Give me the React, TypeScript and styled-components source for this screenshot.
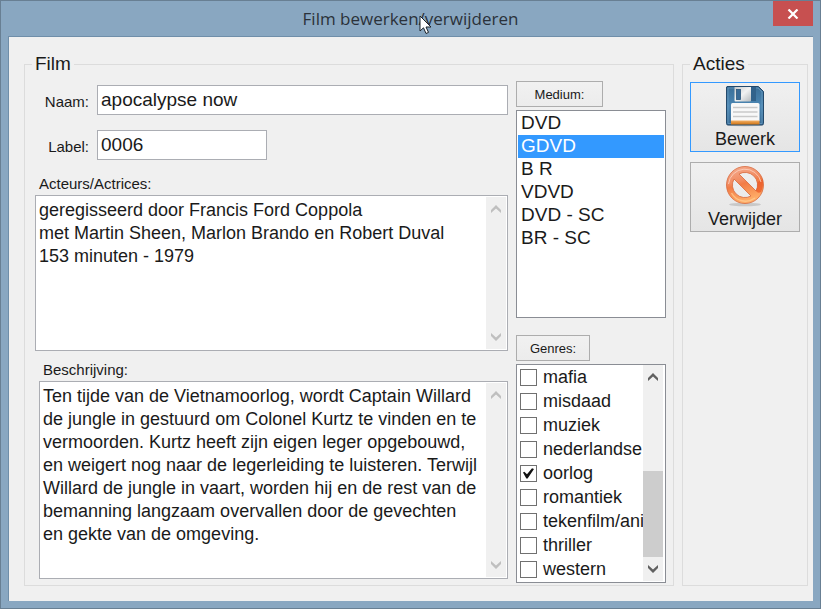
import React, { useState } from "react";
import styled, { createGlobalStyle, css } from "styled-components";

const GlobalStyle = createGlobalStyle`
  *, *::before, *::after { box-sizing: border-box; }
  body {
    margin: 0;
    font-family: "Liberation Sans", Arial, sans-serif;
    font-size: 19px;
    color: #1a1a1a;
  }
  button, input, select, textarea { font: inherit; color: inherit; margin: 0; }
`;

const Window = styled.div`
  min-height: 100vh;
  display: flex;
  flex-direction: column;
  padding: 0 7px 7px;
  background: #89a7c1;
  border: 1px solid #687f93;
`;

const TitleBar = styled.header`
  position: relative;
  height: 35px;
  display: flex;
  justify-content: center;
`;

const Title = styled.h1`
  position: relative;
  margin: 0;
  font: 400 17px/36px "Open Sans", "Noto Sans", sans-serif;
  color: #2b323a;
`;

const Pointer = styled.svg`
  position: absolute;
  left: 116px;
  top: 14px;
  width: 13px;
  height: 20px;
`;

const CloseButton = styled.button`
  position: absolute;
  right: 0;
  top: 0;
  width: 40px;
  height: 25px;
  padding: 0;
  display: flex;
  align-items: center;
  justify-content: center;
  border: 0;
  background: #c75050;
`;

const Client = styled.main`
  flex: 1;
  display: grid;
  grid-template-columns: 1fr 126px;
  gap: 8px;
  padding: 16px 5px 15px 15px;
  background: #f0f0f0;
  border-top: 1px solid #6f8ea9;
  border-left: 1px solid #6f8ea9;
`;

const Group = styled.fieldset`
  min-width: 0;
  margin: 0;
  padding: 6px 7px 2px;
  border: 1px solid #dcdcdc;
  display: flex;
  flex-direction: column;
`;

const Legend = styled.legend`
  padding: 0 3px;
  line-height: 22px;
`;

const FilmBody = styled.div`
  flex: 1;
  display: grid;
  grid-template-columns: 1fr 150px;
  gap: 8px;
  padding-left: 3px;
`;

const Column = styled.div`
  min-width: 0;
  display: flex;
  flex-direction: column;
`;

const FieldColumn = styled(Column)`
  padding: 4px 0;
`;

const ActionColumn = styled(Column)`
  gap: 10px;
  padding-top: 1px;
`;

const Field = styled.div`
  display: grid;
  grid-template-columns: 54px 1fr;
  gap: 8px;
  align-items: center;
  margin-bottom: 15px;
`;

const FieldLabel = styled.label`
  font-size: 15px;
  line-height: 20px;
  padding-top: 4px;
  text-align: right;
`;

const TextInput = styled.input<{ $short?: boolean }>`
  width: ${(p) => (p.$short ? "170px" : "100%")};
  height: 30px;
  padding: 0 3px;
  border: 1px solid #abadb3;
  background: #fff;
  outline: 0;
`;

const AreaLabel = styled.label<{ $indent: number }>`
  margin-left: ${(p) => p.$indent}px;
  font-size: 15px;
  line-height: 18px;
  margin-bottom: 2px;
`;

const frame = css`
  background: #fff;
  border: 1px solid #8a8d94;
`;

const AreaFrame = styled.div<{ $height: number; $indent?: number }>`
  ${frame}
  border-color: #abadb3;
  flex: ${(p) => p.$height} 0 ${(p) => p.$height}px;
  margin-left: ${(p) => p.$indent ?? 0}px;
  padding: 1px;
  display: flex;
  & + label { margin-top: 10px; }
`;

const Area = styled.textarea`
  flex: 1;
  min-width: 0;
  padding: 2px 0 0 2px;
  border: 0;
  outline: 0;
  resize: none;
  overflow: hidden;
  background: transparent;
  font-size: 18px;
  line-height: 23px;
`;

const Track = styled.div`
  width: 20px;
  flex: none;
  display: flex;
  flex-direction: column;
  background: #f0f0f0;
`;

const TrackButton = styled.button`
  width: 100%;
  height: 24px;
  padding: 0;
  border: 0;
  background: transparent;
  display: flex;
  align-items: center;
  justify-content: center;
`;

const TrackSpace = styled.div`
  flex: 1;
  display: flex;
  align-items: flex-end;
`;

const Thumb = styled.div`
  width: 100%;
  height: 51%;
  background: #cdcdcd;
`;

const SmallButton = styled.button<{ $width: number }>`
  width: ${(p) => p.$width}px;
  height: 26px;
  flex: none;
  margin-bottom: 3px;
  padding: 0;
  border: 1px solid #adadad;
  background: linear-gradient(#f1f1f1, #ececec);
  font-size: 13px;
`;

const MediumList = styled.select`
  ${frame}
  flex: 208 0 208px;
  width: 100%;
  margin-bottom: 17px;
  padding: 1px;
  border-radius: 0;
  outline: 0;
  overflow: hidden;
  option {
    min-height: 0;
    padding: 0 3px;
    line-height: 23px;
    height: 23px;
    color: #1a1a1a;
  }
  option:checked {
    color: #fff !important;
    background: linear-gradient(#3399ff, #3399ff);
  }
`;

const GenreFrame = styled.div`
  ${frame}
  flex: 219 0 219px;
  display: flex;
  padding: 0 2px 1px 3px;
`;

const GenreList = styled.div`
  flex: 1;
  min-width: 0;
  height: 216px;
  overflow: hidden;
`;

const GenreRow = styled.label`
  display: flex;
  align-items: center;
  gap: 6px;
  height: 24px;
  font-size: 18px;
  white-space: nowrap;
`;

const Check = styled.input`
  appearance: none;
  flex: none;
  width: 17px;
  height: 17px;
  border: 1px solid #707070;
  background: #fff;
  display: grid;
  place-items: center;
  &:checked::before {
    content: "";
    width: 11px;
    height: 11px;
    background: #111;
    clip-path: polygon(0 46%, 12% 38%, 36% 62%, 82% 6%, 100% 14%, 42% 100%, 30% 100%);
  }
`;

const ActionButton = styled.button<{ $primary?: boolean }>`
  width: 100%;
  height: 70px;
  padding: 2px 0;
  display: flex;
  flex-direction: column;
  align-items: center;
  justify-content: space-between;
  border: 1px solid ${(p) => (p.$primary ? "#3399ff" : "#adadad")};
  background: linear-gradient(#f0f0f0, #e5e5e5);
  font-size: 18px;
  line-height: 20px;
  svg { flex: none; }
`;

const Chevron = ({ down, color }: { down?: boolean; color: string }) => (
  <svg width="10" height="8" viewBox="0 0 10 8" aria-hidden="true">
    <path
      d={down ? "M0 0L5 4.5 10 0V3L5 8 0 3Z" : "M0 8L5 3.5 10 8V5L5 0 0 5Z"}
      fill={color}
    />
  </svg>
);

const ScrollTrack = ({ active }: { active?: boolean }) => {
  const color = active ? "#606060" : "#bfbfbf";
  return (
    <Track>
      <TrackButton type="button" aria-label="Omhoog">
        <Chevron color={color} />
      </TrackButton>
      <TrackSpace>{active && <Thumb />}</TrackSpace>
      <TrackButton type="button" aria-label="Omlaag">
        <Chevron down color={color} />
      </TrackButton>
    </Track>
  );
};

const FloppyIcon = () => (
  <svg width="40" height="42" viewBox="0 0 40 42" aria-hidden="true">
    <defs>
      <linearGradient id="disk" x1="0" y1="0" x2="0" y2="1">
        <stop offset="0" stopColor="#3a6f98" />
        <stop offset="0.5" stopColor="#4b86b3" />
        <stop offset="1" stopColor="#3a6c96" />
      </linearGradient>
      <linearGradient id="shutter" x1="0" y1="0" x2="1" y2="1">
        <stop offset="0" stopColor="#c4c8ca" />
        <stop offset="0.5" stopColor="#f1f2f2" />
        <stop offset="1" stopColor="#b5babd" />
      </linearGradient>
      <linearGradient id="strip" x1="0" y1="0" x2="0" y2="1">
        <stop offset="0" stopColor="#f3b066" />
        <stop offset="1" stopColor="#cf7415" />
      </linearGradient>
    </defs>
    <ellipse cx="20" cy="40" rx="18" ry="1.5" fill="#000" opacity="0.12" />
    <path d="M2 1.5H33.5L38.5 6.5V38.5Q38.5 40 37 40H3Q1.5 40 1.5 38.5V2Z" fill="url(#disk)" stroke="#23496b" />
    <path d="M3 3H33L37 7V38.5H3Z" fill="none" stroke="#79a8cb" strokeWidth="0.8" opacity="0.7" />
    <path d="M9.5 2H26V15.5Q26 16.5 25 16.5H10.5Q9.5 16.5 9.5 15.5Z" fill="url(#shutter)" />
    <path d="M26 2H31V16H26Z" fill="#31628b" />
    <rect x="11.5" y="4.5" width="4" height="10" fill="#396b96" stroke="#29557c" strokeWidth="0.8" />
    <path d="M6 19.5Q6 18 7.5 18H33Q34.5 18 34.5 19.5V36H6Z" fill="#f8f8f8" />
    <path d="M8 22.5H32.5M8 27H32.5M8 31.5H32.5" stroke="#c9c9c9" strokeWidth="1.3" />
    <path d="M6 35.5H34.5V39.5H6Z" fill="url(#strip)" />
  </svg>
);

const ForbiddenIcon = () => (
  <svg width="40" height="42" viewBox="0 0 40 42" aria-hidden="true">
    <defs>
      <linearGradient id="ring" x1="0" y1="0" x2="0.3" y2="1">
        <stop offset="0" stopColor="#f5b095" />
        <stop offset="0.45" stopColor="#f28c62" />
        <stop offset="0.55" stopColor="#f27c46" />
        <stop offset="1" stopColor="#ffae68" />
      </linearGradient>
    </defs>
    <ellipse cx="20" cy="39.5" rx="16" ry="1.8" fill="#000" opacity="0.14" />
    <path
      fillRule="evenodd"
      d="M20 1.5A18.5 18.5 0 1 1 20 38.5A18.5 18.5 0 1 1 20 1.5ZM14 9L31 26A12.5 12.5 0 0 0 14 9ZM9 14A12.5 12.5 0 0 0 26 31Z"
      fill="url(#ring)"
      stroke="#d8683b"
      strokeWidth="0.8"
    />
    <path d="M32.500 17Q35 16 37.5 14Q39 21 36 27Q33 29 31 26Q33 22 32.500 17Z" fill="#e8501f" opacity="0.65" />
    <path d="M3.5 19A16.5 16.5 0 0 1 36 17" fill="none" stroke="#fbd3c2" strokeWidth="1" opacity="0.8" />
    <path d="M6.5 28A16 16 0 0 0 30 33" fill="none" stroke="#ffcf95" strokeWidth="1.5" opacity="0.7" />
  </svg>
);

const media = ["DVD", "GDVD", "B R", "VDVD", "DVD - SC", "BR - SC"];
const genres = [
  "mafia", "misdaad", "muziek", "nederlandse", "oorlog",
  "romantiek", "tekenfilm/ani", "thriller", "western",
];
const cast =
  "geregisseerd door Francis Ford Coppola\nmet Martin Sheen, Marlon Brando en Robert Duval\n153 minuten - 1979";
const description =
  "Ten tijde van de Vietnamoorlog, wordt Captain Willard de jungle in gestuurd om Colonel Kurtz te vinden en te vermoorden. Kurtz heeft zijn eigen leger opgebouwd, en weigert nog naar de legerleiding te luisteren. Terwijl Willard de jungle in vaart, worden hij en de rest van de bemanning langzaam overvallen door de gevechten\nen gekte van de omgeving.";

export default function App() {
  const [medium, setMedium] = useState("GDVD");
  return (
    <>
      <GlobalStyle />
      <Window>
        <TitleBar>
          <Title>
            Film bewerken/verwijderen
            <Pointer viewBox="0 0 13 20" aria-hidden="true">
              <path d="M1 1V16L4.5 12.8 7 18.5 9.5 17.4 7 12H12Z" fill="#fff" stroke="#1c2229" strokeWidth="1" />
            </Pointer>
          </Title>
          <CloseButton type="button" aria-label="Sluiten">
            <svg width="12" height="10" viewBox="0 0 12 10" aria-hidden="true">
              <path d="M1.5 0.5L10.5 9.5M10.5 0.5L1.5 9.5" stroke="#fff" strokeWidth="2.2" />
            </svg>
          </CloseButton>
        </TitleBar>
        <Client>
          <Group>
            <Legend>Film</Legend>
            <FilmBody>
              <FieldColumn>
                <Field>
                  <FieldLabel htmlFor="naam">Naam:</FieldLabel>
                  <TextInput id="naam" defaultValue="apocalypse now" />
                </Field>
                <Field>
                  <FieldLabel htmlFor="label">Label:</FieldLabel>
                  <TextInput id="label" $short defaultValue="0006" />
                </Field>
                <AreaLabel htmlFor="cast" $indent={4}>Acteurs/Actrices:</AreaLabel>
                <AreaFrame $height={156}>
                  <Area id="cast" defaultValue={cast} />
                  <ScrollTrack />
                </AreaFrame>
                <AreaLabel htmlFor="description" $indent={8}>Beschrijving:</AreaLabel>
                <AreaFrame $height={198} $indent={4}>
                  <Area id="description" defaultValue={description} />
                  <ScrollTrack />
                </AreaFrame>
              </FieldColumn>
              <Column>
                <SmallButton type="button" $width={87}>Medium:</SmallButton>
                <MediumList
                  size={9}
                  aria-label="Medium"
                  value={medium}
                  onChange={(e) => setMedium(e.target.value)}
                >
                  {media.map((m) => <option key={m}>{m}</option>)}
                </MediumList>
                <SmallButton type="button" $width={74}>Genres:</SmallButton>
                <GenreFrame>
                  <GenreList>
                    {genres.map((g) => (
                      <GenreRow key={g}>
                        <Check type="checkbox" defaultChecked={g === "oorlog"} />
                        {g}
                      </GenreRow>
                    ))}
                  </GenreList>
                  <ScrollTrack active />
                </GenreFrame>
              </Column>
            </FilmBody>
          </Group>
          <Group>
            <Legend>Acties</Legend>
            <ActionColumn>
              <ActionButton type="button" $primary>
                <FloppyIcon />
                Bewerk
              </ActionButton>
              <ActionButton type="button">
                <ForbiddenIcon />
                Verwijder
              </ActionButton>
            </ActionColumn>
          </Group>
        </Client>
      </Window>
    </>
  );
}
